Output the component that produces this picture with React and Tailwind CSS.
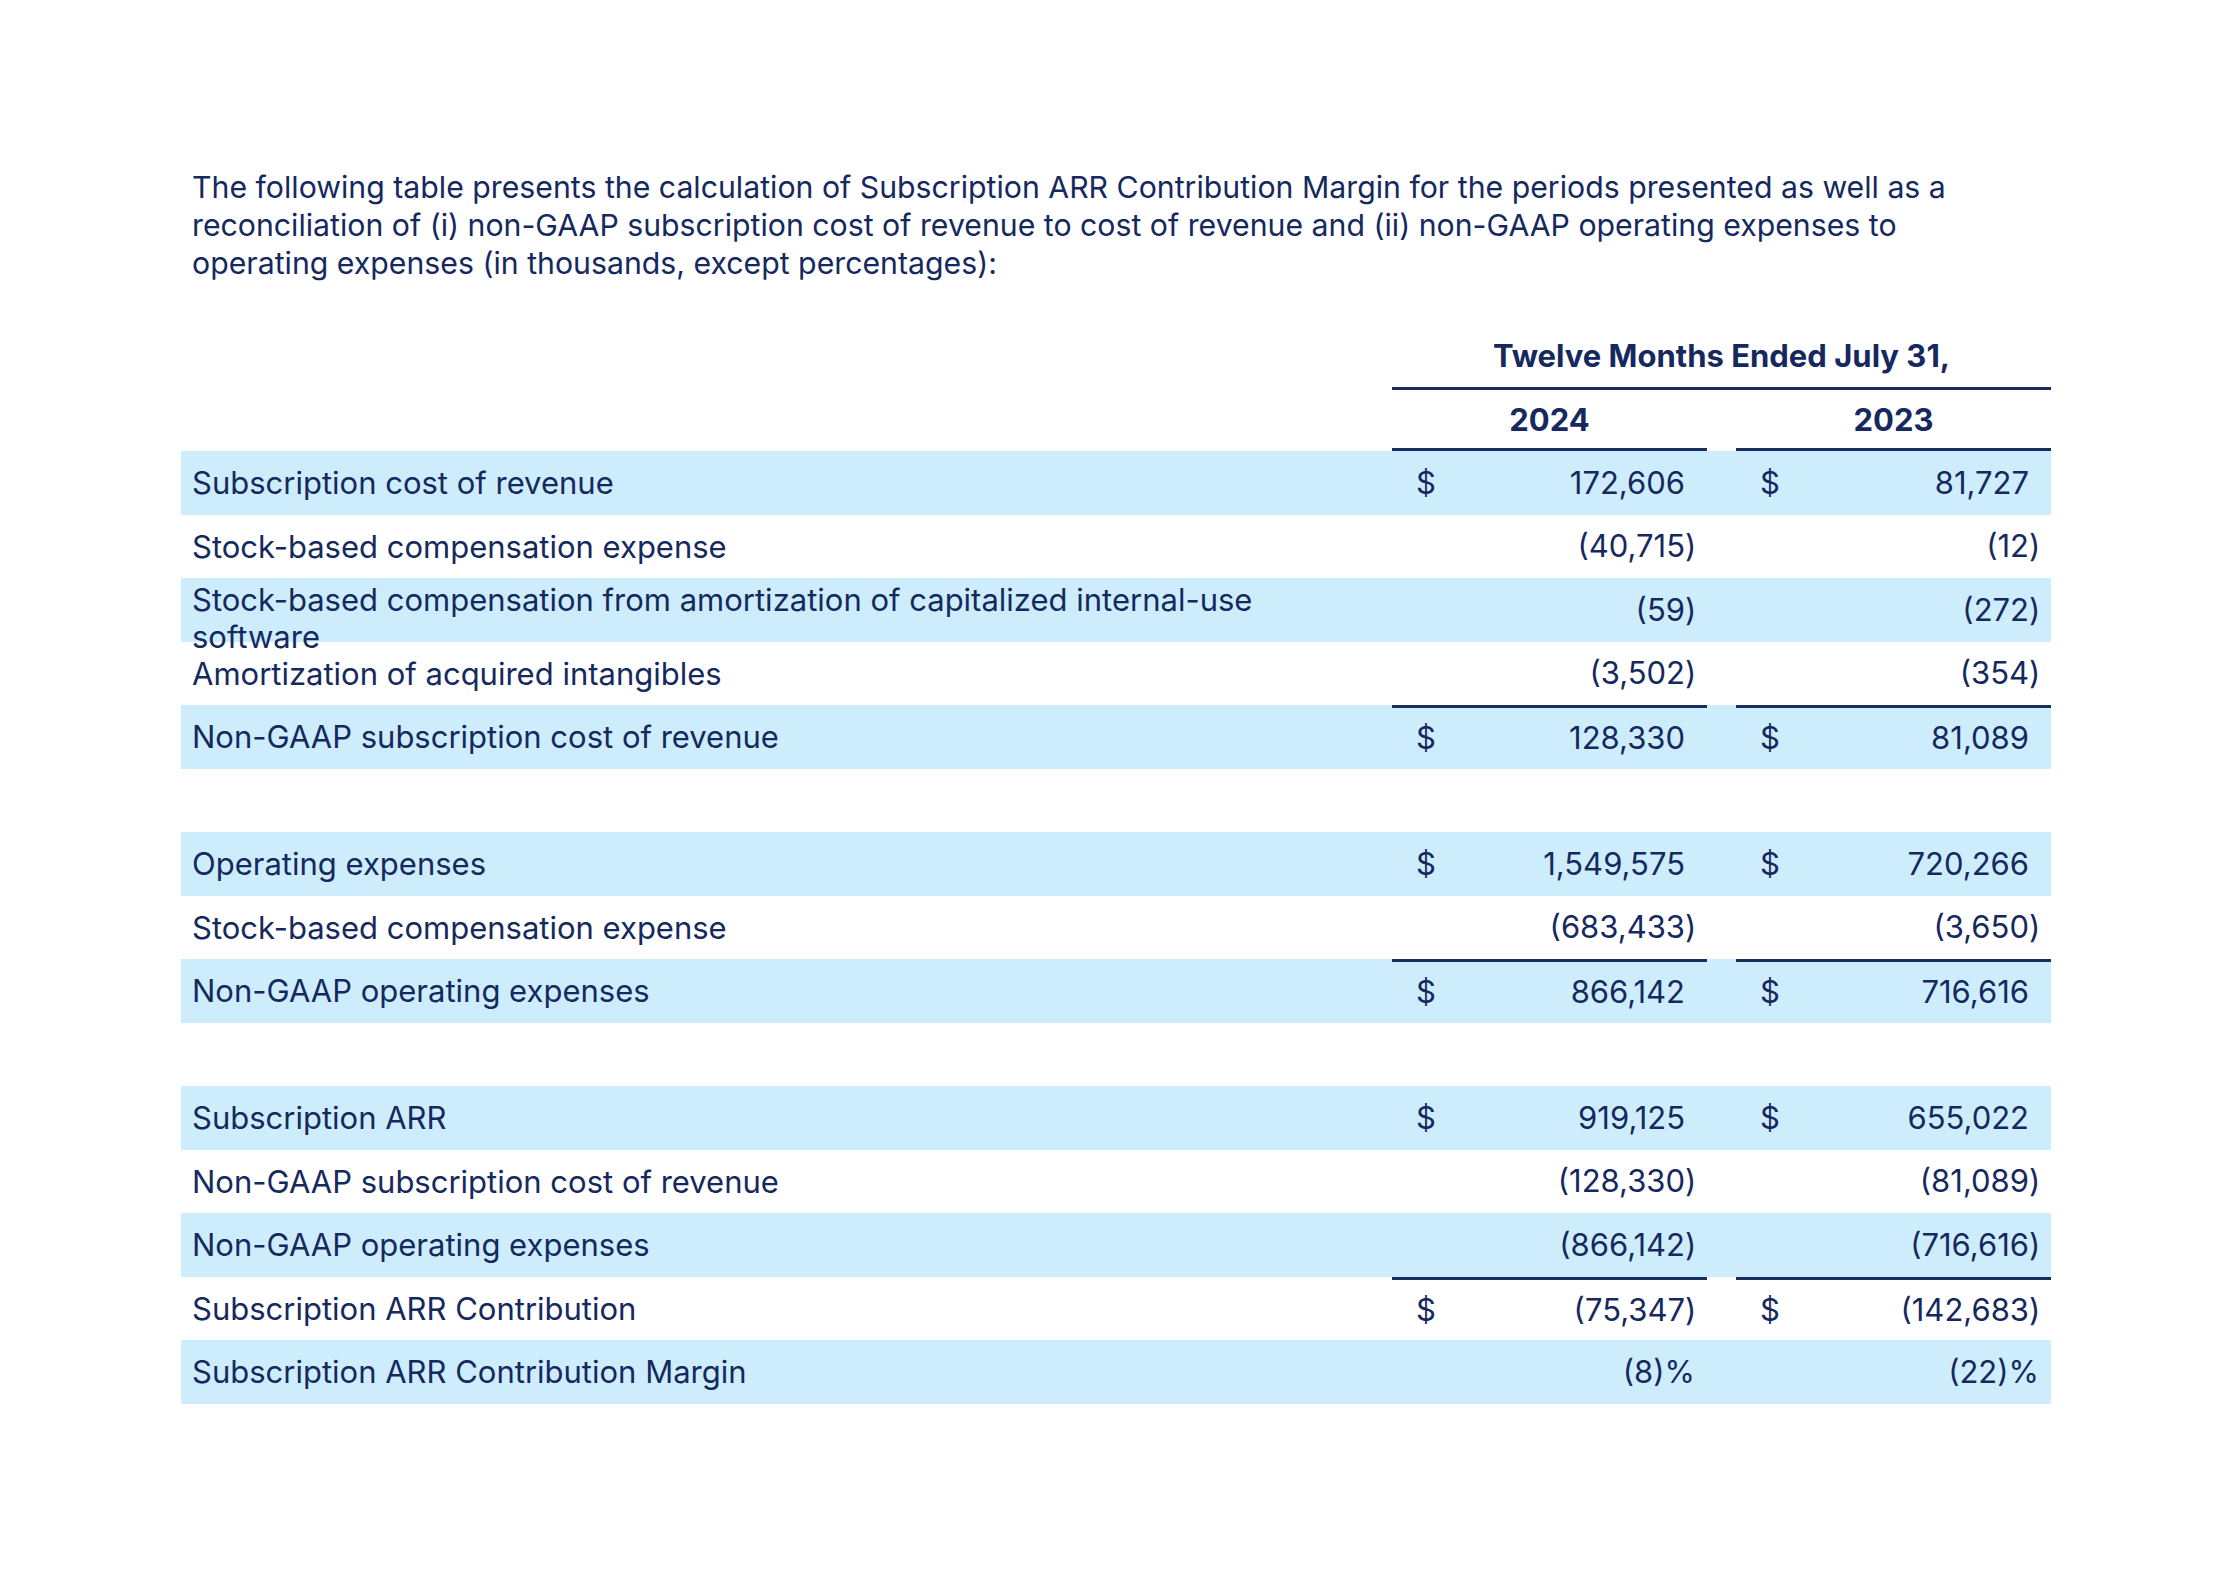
const rows = [
  { label: 'Subscription cost of revenue', a: '172,606', b: '81,727', dollar: true },
  { label: 'Stock-based compensation expense', a: '(40,715)', b: '(12)' },
  { label: 'Stock-based compensation from amortization of capitalized internal-use software', a: '(59)', b: '(272)', wrap: true },
  { label: 'Amortization of acquired intangibles', a: '(3,502)', b: '(354)' },
  { label: 'Non-GAAP subscription cost of revenue', a: '128,330', b: '81,089', dollar: true, line: true },
  { blank: true },
  { label: 'Operating expenses', a: '1,549,575', b: '720,266', dollar: true },
  { label: 'Stock-based compensation expense', a: '(683,433)', b: '(3,650)' },
  { label: 'Non-GAAP operating expenses', a: '866,142', b: '716,616', dollar: true, line: true },
  { blank: true },
  { label: 'Subscription ARR', a: '919,125', b: '655,022', dollar: true },
  { label: 'Non-GAAP subscription cost of revenue', a: '(128,330)', b: '(81,089)' },
  { label: 'Non-GAAP operating expenses', a: '(866,142)', b: '(716,616)' },
  { label: 'Subscription ARR Contribution', a: '(75,347)', b: '(142,683)', dollar: true, line: true },
  { label: 'Subscription ARR Contribution Margin', a: '(8)%', b: '(22)%', pct: true },
];

const Amount = ({ value, dollar, line, pct }) => {
  const neg = value.startsWith('(') && !pct;
  return (
    <div
      className={`flex items-center justify-between pl-[24px] pr-[12px] h-full ${
        line ? 'border-t-[3px] border-[#1b2d5f]' : ''
      }`}
    >
      <span>{dollar ? '$' : ''}</span>
      {pct ? (
        <span>{value}</span>
      ) : (
        <span className="flex">
          <span>{neg ? value.slice(0, -1) : value}</span>
          <span className="inline-block w-[10px] text-right">{neg ? ')' : ''}</span>
        </span>
      )}
    </div>
  );
};

export default function App() {
  return (
    <div
      className="w-[2231px] min-h-[1581px] bg-white text-[#15295e] pt-[168px] pl-[181px]"
      style={{ fontFamily: 'Inter, "Noto Sans", sans-serif' }}
    >
      <p className="w-[1830px] px-[11px] text-[30.25px] leading-[38px]">
        The following table presents the calculation of Subscription ARR Contribution Margin for the periods presented as well as a reconciliation of (i) non-GAAP subscription cost of revenue to cost of revenue and (ii) non-GAAP operating expenses to operating expenses (in thousands, except percentages):
      </p>

      <div className="mt-[42px] w-[1870px] text-[31px]">
        {/* Header */}
        <div className="grid grid-cols-[1211px_659px] h-[66px]">
          <div />
          <div className="flex items-center justify-center pt-[2px] font-bold border-b-[3px] border-[#1b2d5f]">
            Twelve Months Ended July 31,
          </div>
        </div>
        <div className="grid grid-cols-[1211px_315px_29px_315px] h-[61px] font-bold">
          <div />
          <div className="flex items-center justify-center pt-[2px] border-b-[3px] border-[#1b2d5f]">2024</div>
          <div />
          <div className="flex items-center justify-center pt-[2px] border-b-[3px] border-[#1b2d5f]">2023</div>
        </div>

        {/* Body */}
        {rows.map((r, i) => (
          <div
            key={i}
            className={`grid grid-cols-[1211px_315px_29px_315px] grid-rows-[63.5px] h-[63.5px] ${
              i % 2 === 0 && !r.blank ? 'bg-[#cdedfd]' : ''
            }`}
          >
            {r.blank ? null : (
              <>
                <div
                  className={`flex pl-[11px] pr-[100px] leading-[37px] ${
                    r.wrap ? 'items-start pt-[3px]' : 'items-center'
                  }`}
                >
                  <span>{r.label}</span>
                </div>
                <Amount value={r.a} dollar={r.dollar} line={r.line} pct={r.pct} />
                <div />
                <Amount value={r.b} dollar={r.dollar} line={r.line} pct={r.pct} />
              </>
            )}
          </div>
        ))}
      </div>
    </div>
  );
}
